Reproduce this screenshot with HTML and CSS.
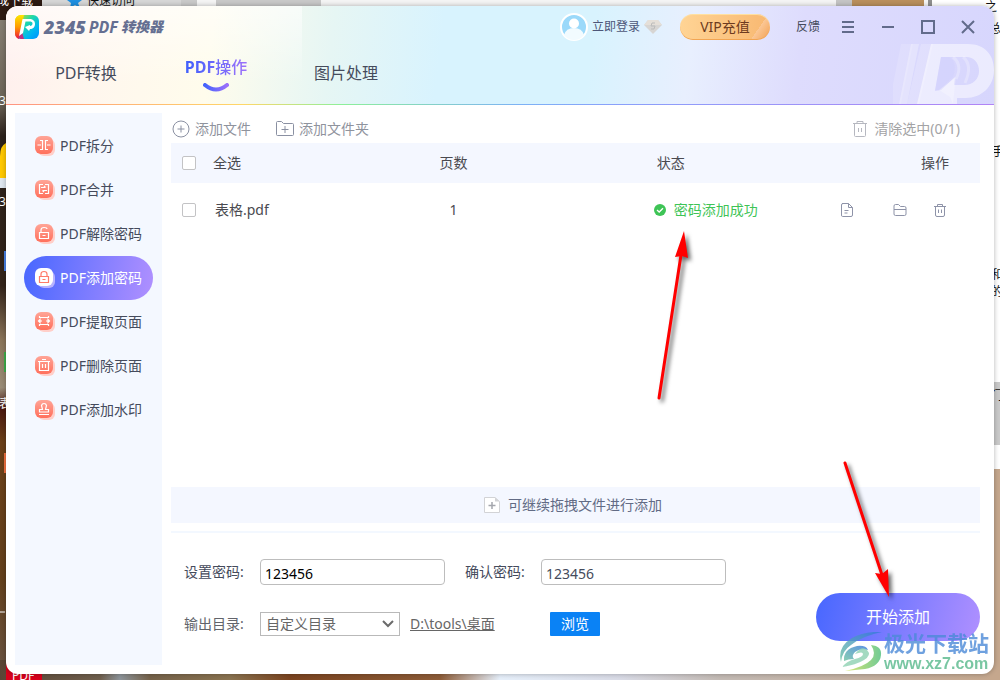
FILE: index.html
```html
<!DOCTYPE html>
<html lang="zh-CN">
<head>
<meta charset="utf-8">
<title>2345PDF转换器</title>
<link rel="stylesheet" href="styles.css">
</head>
<body>
<div class="desktop">
  <svg class="wallpaper" viewBox="0 0 1000 680" preserveAspectRatio="none" aria-hidden="true">
    <defs>
      <linearGradient id="wl" x1="0" y1="0" x2="0" y2="1">
        <stop offset="0" stop-color="#8b8378"/><stop offset=".15" stop-color="#6b6255"/><stop offset=".2" stop-color="#2c221b"/><stop offset=".42" stop-color="#33241a"/><stop offset=".5" stop-color="#8a7458"/><stop offset=".57" stop-color="#9a8c76"/><stop offset=".6" stop-color="#4a1810"/><stop offset=".65" stop-color="#6b4018"/><stop offset=".85" stop-color="#63401c"/><stop offset="1" stop-color="#6a5545"/>
      </linearGradient>
      <linearGradient id="wb">
        <stop offset="0" stop-color="#5a4535"/><stop offset=".1" stop-color="#6f5f4d"/><stop offset=".12" stop-color="#8d949a"/><stop offset=".15" stop-color="#75624a"/><stop offset=".23" stop-color="#8a7350"/><stop offset=".29" stop-color="#7b4420"/><stop offset=".44" stop-color="#8d5c38"/><stop offset=".5" stop-color="#e6effa"/><stop offset=".62" stop-color="#d9dbe6"/><stop offset=".72" stop-color="#c3bab4"/><stop offset="1" stop-color="#c5a78d"/>
      </linearGradient>
    </defs>
    <rect width="1000" height="680" fill="#f4f4f4"/>
    <rect width="20" height="680" fill="url(#wl)"/>
    <rect x="0" y="660" width="1000" height="20" fill="url(#wb)"/>
    <rect width="42" height="20" fill="#2d1a12"/>
    <rect x="42" width="139" height="20" fill="#d6d6d6"/>
    <rect x="181" width="16" height="20" fill="#c9c9c9"/>
    <rect x="216" width="105" height="20" fill="#c8c8c8"/>
    <rect x="836" width="16" height="20" fill="#c4c4c4"/>
    <rect x="852" width="72" height="20" fill="#b98f5c"/>
    <rect x="928" width="4" height="20" fill="#8f8f8f"/>
    <path d="M932 0h68v470h-10V10h-58z" fill="#fff"/>
    <path d="M990 382h10v63h-10z" fill="#c9c9c9"/>
    <path d="M990 469h10v211h-10z" fill="#c5a78d"/>
    <path d="M75 -6l2 5 5 1-4 3 2 5-5-3-5 3 1-5-4-3 5-1z" fill="#1e8fe0"/>
    <text class="bg-text" x="87" y="5">快速访问</text>
    <text class="bg-text bg-text-light" x="-3" y="5">成下载</text>
    <text class="bg-text" x="985" y="11">之</text>
    <text class="bg-text" x="989" y="33">总</text>
    <text class="bg-text" x="992" y="156">手</text>
    <text class="bg-text" x="991" y="279">和</text>
    <text class="bg-text" x="991" y="296">的</text>
    <text class="bg-text" x="991" y="400">门</text>
    <path d="M6 143q-6 3-6 13v22h6z" fill="#ffc800"/>
    <rect y="178" width="6" height="10" fill="#dfe7ef"/>
    <rect x="4" y="251" width="4" height="20" fill="#4a83e8"/>
    <rect x="4" y="352" width="4" height="20" fill="#3fae4a"/>
    <rect x="4" y="453" width="4" height="20" fill="#f27340"/>
    <text class="bg-text bg-text-light" x="-1" y="105">3</text>
    <text class="bg-text bg-text-light" x="-1" y="206">3</text>
    <text class="bg-text bg-text-light" x="-1" y="408">表</text>
    <path d="M0 612h5" stroke="#fff"/>
    <rect x="6" y="650" width="36" height="30" fill="#d9001b"/>
    <text class="bg-text bg-text-light" x="12" y="680">PDF</text>
  </svg>

  <main class="window">
    <header class="header">
      <svg class="header-mark" viewBox="0 0 101 60" aria-hidden="true">
        <path d="M8 0h12L8 60H-4z" fill="#fff" opacity=".14"/>
        <path d="M18 0h8L14 60H6z" fill="#fff" opacity=".28"/>
        <path d="M28 0h12L26 60H14z" fill="#fff" opacity=".2"/>
        <path d="M38 0h37c17 0 26 11 26 26 0 17-13 28-28 28H64v6H24zM48 13l-6 34 6-1 14-13-1 8h10c9 0 15-6 15-14s-5-14-13-14z" fill="#fff" fill-rule="evenodd" opacity=".5"/>
        <path d="M48 13h8q9 5 4 20L46 46h-4z" fill="#cfcdfb" opacity=".35"/>
        <path d="M60 13q10 8 3 22M70 13q10 8 2 26" fill="none" stroke="#fff" stroke-width="3" opacity=".25"/>
        <path d="M46 46l17-13-1 8-2 19-3-7z" fill="#fff" opacity=".25"/>
      </svg>
      <div class="titlebar">
        <svg class="logo" viewBox="0 0 24 24" aria-hidden="true">
          <defs>
            <linearGradient id="lg1" x1="0" y1="0" x2="1" y2="1"><stop offset="0" stop-color="#ffe000"/><stop offset=".4" stop-color="#20d8a8"/><stop offset=".7" stop-color="#00b8f0"/><stop offset="1" stop-color="#0090ff"/></linearGradient>
            <linearGradient id="lg2" x1="0" y1="0" x2="0" y2="1"><stop offset="0" stop-color="#ffe600"/><stop offset=".5" stop-color="#ff9a00"/><stop offset="1" stop-color="#f0103c"/></linearGradient>
          </defs>
          <rect width="24" height="24" rx="6" fill="url(#lg1)"/>
          <path d="M6 0h3L4 24a6 6 0 0 1-4-6V6a6 6 0 0 1 6-6z" fill="url(#lg2)"/>
          <path d="M3 23l4-6 2 7H6z" fill="#c03080"/>
          <path d="M8 18l-4 3L7.500 4H14c4 0 6 2 6 5s-2 5-5 5l-1 2-4-4 5-2v1c1.500 0 2.500-1 2.500-2.500S16.500 6.500 14 6.500h-3.500z" fill="#fff"/>
        </svg>
        <h1 class="brand"><span class="brand-num">2345</span><span class="brand-pdf">PDF</span><span class="brand-cn">转换器</span></h1>
        <button class="login" type="button">
          <svg class="avatar" viewBox="0 0 28 28" aria-hidden="true"><circle cx="14" cy="14" r="13" fill="#9bd9fa" stroke="#fff" stroke-width="2"/><circle cx="14" cy="10.500" r="5" fill="#fff"/><path d="M4 22q2-7 10-7t10 7q-4 5-10 5T4 22z" fill="#f2fbff"/></svg>
          <span>立即登录</span>
          <svg class="gem" viewBox="0 0 18 14" aria-hidden="true"><path d="M4 0h10l4 5-9 9-9-9z" fill="#d7d5d3"/><path d="M4 0h10l4 5H0z" fill="#e5dfd8"/><path d="M11 3H8L7 6h4l-1 3H7" fill="none" stroke="#bbb"/></svg>
        </button>
        <button class="vip" type="button">VIP充值</button>
        <a class="feedback" href="#">反馈</a>
        <div class="controls">
          <button type="button" aria-label="菜单"><svg viewBox="0 0 14 14"><path d="M1 2h12M1 7h12M1 12h12"/></svg></button>
          <button type="button" aria-label="最小化"><svg viewBox="0 0 14 14"><path d="M1 7h12"/></svg></button>
          <button type="button" aria-label="最大化"><svg viewBox="0 0 14 14"><path d="M1 1h12v12H1z"/></svg></button>
          <button type="button" aria-label="关闭"><svg viewBox="0 0 14 14"><path d="M1 1l12 12M13 1L1 13"/></svg></button>
        </div>
      </div>
      <nav class="tabs">
        <a class="tab" href="#">PDF转换</a>
        <a class="tab tab-active" href="#"><span class="tab-label"><b>PDF</b>操作</span>
          <svg class="smile" viewBox="0 0 26 9" aria-hidden="true"><defs><linearGradient id="sm"><stop offset="0" stop-color="#4563fc"/><stop offset="1" stop-color="#9a70fa"/></linearGradient></defs><path d="M2 2q11 9 22 0" fill="none" stroke="url(#sm)" stroke-width="4" stroke-linecap="round"/></svg>
        </a>
        <a class="tab" href="#">图片处理</a>
      </nav>
    </header>

    <div class="body">
      <svg class="defs" aria-hidden="true"><defs>
        <linearGradient id="coral" x1="0" y1="0" x2="0" y2="1"><stop offset="0" stop-color="#ffa597"/><stop offset="1" stop-color="#ff705c"/></linearGradient>
      </defs></svg>
      <nav class="sidebar">
        <a class="item" href="#"><svg class="tool" viewBox="0 0 20 20"><rect class="tool-shade" x="3" y="3" width="17" height="17" rx="6"/><rect class="tool-face" width="18" height="18" rx="6"/><path class="tool-line" d="M5 4.500h2.500v9H5M13 4.500h-2.500v9H13M2.500 9H6M12 9h3.500"/></svg>PDF拆分</a>
        <a class="item" href="#"><svg class="tool" viewBox="0 0 20 20"><rect class="tool-shade" x="3" y="3" width="17" height="17" rx="6"/><rect class="tool-face" width="18" height="18" rx="6"/><path class="tool-line" d="M8 4.500H4.500v9H8M10 4.500h3.500v9H10M6 7.500h4.500M9 6l1.500 1.500M12 10.500H7.500M9 12l-1.500-1.500"/></svg>PDF合并</a>
        <a class="item" href="#"><svg class="tool" viewBox="0 0 20 20"><rect class="tool-shade" x="3" y="3" width="17" height="17" rx="6"/><rect class="tool-face" width="18" height="18" rx="6"/><path class="tool-line" d="M4.500 8.500h9v6h-9zM6 8.500V6q0-2.500 3-2.500T12 5M7.500 11.500h3"/></svg>PDF解除密码</a>
        <a class="item item-active" href="#"><svg class="tool" viewBox="0 0 20 20"><rect class="tool-shade" x="3" y="3" width="17" height="17" rx="6"/><rect class="tool-face" width="18" height="18" rx="6"/><path class="tool-line" d="M4.500 8.500h9v6h-9zM6 8.500V6q0-2.500 3-2.500T12 6v2.500M7.500 11.500h3"/></svg>PDF添加密码</a>
        <a class="item" href="#"><svg class="tool" viewBox="0 0 20 20"><rect class="tool-shade" x="3" y="3" width="17" height="17" rx="6"/><rect class="tool-face" width="18" height="18" rx="6"/><path class="tool-line" d="M4.500 4v1.500h9V4M4.500 14v-1.500h9V14M3.500 9H7M14.500 9H11M5 7.500L3.500 9 5 10.500zM13 7.500L14.500 9 13 10.500z"/></svg>PDF提取页面</a>
        <a class="item" href="#"><svg class="tool" viewBox="0 0 20 20"><rect class="tool-shade" x="3" y="3" width="17" height="17" rx="6"/><rect class="tool-face" width="18" height="18" rx="6"/><path class="tool-line" d="M3 5.500h12M7 3.500h4M4.500 5.500v9h9v-9M7.500 8v4M10.500 8v4"/></svg>PDF删除页面</a>
        <a class="item" href="#"><svg class="tool" viewBox="0 0 20 20"><rect class="tool-shade" x="3" y="3" width="17" height="17" rx="6"/><rect class="tool-face" width="18" height="18" rx="6"/><path class="tool-line" d="M4 14.500h10M4.500 12V9.500h3L6.500 5.500Q7 3.500 9 3.500t2.500 2l-1 4h3V12z"/></svg>PDF添加水印</a>
      </nav>

      <section class="content">
        <div class="toolbar">
          <button class="tool-btn" type="button"><svg width="18" height="18" viewBox="0 0 18 18"><circle cx="9" cy="9" r="8"/><path d="M9 5.500v7M5.500 9h7"/></svg>添加文件</button>
          <button class="tool-btn" type="button"><svg width="18" height="18" viewBox="0 0 18 18"><path d="M.5 2.500q0-1 1-1h4l2 2h9q1 0 1 1v10q0 1-1 1h-15q-1 0-1-1zM9 6v7M5.500 9.500h7"/></svg>添加文件夹</button>
          <button class="tool-btn tool-clear" type="button"><svg width="16" height="18" viewBox="0 0 16 18"><path d="M1 3.500h14M5 3.500V1.500h6v2M2.500 3.500v12q0 1 1 1h9q1 0 1-1v-12M6.500 8v4M9.500 8v4"/></svg>清除选中(0/1)</button>
        </div>
        <table class="files">
          <colgroup><col class="c-check"><col class="c-name"><col class="c-pages"><col class="c-status"><col class="c-ops"></colgroup>
          <thead>
            <tr><th class="check"><input type="checkbox" id="all"></th><th><label for="all">全选</label></th><th>页数</th><th class="th-status">状态</th><th class="th-ops">操作</th></tr>
          </thead>
          <tbody>
            <tr><td class="check"><input type="checkbox" id="f1"></td><td class="name"><label for="f1">表格.pdf</label></td><td class="pages">1</td>
              <td><div class="status"><svg width="12" height="12" viewBox="0 0 12 12" aria-hidden="true"><circle cx="6" cy="6" r="6" fill="#3ec456"/><path d="M3 6l2.200 2L9 4.300" fill="none" stroke="#fff" stroke-width="1.300"/></svg>密码添加成功</div></td>
              <td><div class="ops">
                <button class="op-open" type="button" aria-label="打开文件"><svg viewBox="0 0 14 14"><path d="M2 .5h6.500l4 4V12q0 1.500-1.500 1.500H2.500Q1.500 13.500 1.500 12V2Q1.500.5 3 .5M8.500.5v4h4M4.500 7.500h4M4.500 10h3"/></svg></button>
                <button class="op-folder" type="button" aria-label="打开目录"><svg viewBox="0 0 14 14"><path d="M1 3q0-1.500 1.500-1.500h3l2 2h4Q13 3.500 13 5v6q0 1.500-1.500 1.500h-9Q1 12.500 1 11zM1 6.500h12"/></svg></button>
                <button type="button" aria-label="删除"><svg viewBox="0 0 14 14"><path d="M1 3.500h12M4.500 3.500v-2h5v2M2.500 3.500V12q0 1.500 1.500 1.500h6q1.500 0 1.500-1.500V3.500M5.500 6.500v3.500M8.500 6.500v3.500"/></svg></button>
              </div></td></tr>
          </tbody>
        </table>
        <div class="dropbar"><svg width="16" height="16" viewBox="0 0 16 16" aria-hidden="true"><path d="M.5.5H11l4.500 4v11H.5z" fill="#fff" stroke="#d2d3d6"/><path d="M11 .5v4h4.500z" fill="#d2d3d6"/><path d="M8 5v7M4.500 8.500h7" stroke="#a4a6ad" stroke-width="1.500"/></svg>可继续拖拽文件进行添加</div>
        <form class="options">
          <div class="fields">
            <div class="field-row">
              <label class="caption" for="pw1">设置密码:</label><input class="pw pw-main" id="pw1" type="text" value="123456">
              <label class="caption caption-next" for="pw2">确认密码:</label><input class="pw" id="pw2" type="text" value="123456">
            </div>
            <div class="field-row">
              <label class="caption caption-out" for="dir">输出目录:</label>
              <div class="select-wrap"><select id="dir"><option>自定义目录</option></select><svg class="chevron" viewBox="0 0 12 8" aria-hidden="true"><path d="M1 1l5 5 5-5" fill="none" stroke="#6b6b6b" stroke-width="2"/></svg></div>
              <a class="path" href="#">D:\tools\桌面</a>
              <button class="browse" type="button">浏览</button>
            </div>
          </div>
          <button class="start" type="button">开始添加</button>
        </form>
      </section>
    </div>
  </main>

  <svg class="arrows" viewBox="0 0 1000 680" aria-hidden="true">
    <g class="arrow"><path d="M659 398L681 255" stroke-width="3" stroke-linecap="round"/><path d="M684 231l4 27-6-2-7 1z"/></g>
    <g class="arrow"><path d="M845 463L882 575" stroke-width="3" stroke-linecap="round"/><path d="M889 597l-14-24 7 1 6-5z"/></g>
  </svg>

  <div class="stamp">
    <svg class="swirl" viewBox="0 0 42 40" aria-hidden="true">
      <defs><linearGradient id="sw1" x1="0" y1="1" x2="1" y2="0"><stop offset="0" stop-color="#6cc3a0"/><stop offset="1" stop-color="#3478dc"/></linearGradient><linearGradient id="sw2"><stop offset="0" stop-color="#d3e04e"/><stop offset="1" stop-color="#4fbf7c"/></linearGradient></defs>
      <path d="M42 0Q24-1 12 6-3 15 1 30q1-11 10-17Q22 4 42 0z" fill="url(#sw1)"/>
      <path d="M4 29q-1-12 13-15 9-1 11 4-8-2-13 2-4 4-1 7-6 0-10 2z" fill="url(#sw1)"/>
      <path d="M31 13q11 1 10 10-1 11-16 14l-20 2q19-4 26-11 6-6 0-15z" fill="url(#sw2)"/>
      <path d="M15 22q8-3 8 0t-8 5q-8 2-13 8 14-2 22-7t3-10-12 4z" fill="#79c9a5" opacity=".85"/>
    </svg>
    <div class="stamp-text"><span class="stamp-cn">极光下载站</span><span class="stamp-url">www.xz7.com</span></div>
  </div>
</div>
</body>
</html>
```
FILE: styles.css
```css
* { box-sizing: border-box; }
body {
  margin: 0;
  font: 14px/20px "Noto Sans", "Noto Sans CJK SC", sans-serif;
  color: #454b5c;
}
button, input, select { font: inherit; color: inherit; margin: 0; }
button { padding: 0; border: 0; background: none; }
a { color: inherit; text-decoration: none; }
svg { flex: none; }

.desktop { position: relative; display: flex; min-height: 100vh; padding: 6px; overflow: hidden; }
.wallpaper { position: absolute; inset: 0; width: 100%; height: 100%; }
.bg-text { font-size: 12px; fill: #111; }
.bg-text-light { fill: #fff; }

.window {
  position: relative; flex: 1; display: flex; flex-direction: column;
  background: #fff; border-radius: 12px; overflow: hidden;
  box-shadow: 0 0 5px rgba(0, 0, 0, .3);
}

/* Header */
.header {
  position: relative;
  border-bottom: 1px solid;
  border-image: linear-gradient(90deg, #ff9482, #ffd768 24%, #8df09a 34%, #7db2f5 52%, #8aa0fa 62%, #b184f5) 1;
  background:
    linear-gradient(180deg, rgba(255, 255, 255, .6), rgba(255, 255, 255, 0) 80%) left / 30% 100% no-repeat,
    linear-gradient(97deg, #ffefed, #fff6ee 8%, #fffcec 21%, #e6f6f4 33%, #d8f3fe 44%, #d8f3fe 59%, #e8effe 69%, #dedcfd 80%, #d7d6fd);
}
.header-mark { position: absolute; right: 0; bottom: 0; width: 101px; height: 60px; }
.titlebar { position: relative; display: flex; align-items: center; height: 42px; padding: 0 6px 0 9px; }
.logo { width: 24px; height: 24px; }
.brand {
  display: flex; align-items: center; gap: 3px; margin: 0 auto 0 5px;
  font-size: 16px; font-weight: 700; font-style: italic; color: #656f91;
}
.brand-num { font-size: 18px; font-weight: 900; }
.brand-cn { font-size: 14px; font-weight: 900; }
.login { display: flex; align-items: center; gap: 4px; margin-right: 18px; font-size: 12px; color: #4d5678; }
.avatar { width: 28px; height: 28px; }
.gem { width: 18px; height: 14px; }
.vip {
  width: 90px; height: 26px; border-radius: 13px; color: #6d3b20;
  background: linear-gradient(125deg, transparent 82%, #fbc795 82%, #f5ac66 94%), linear-gradient(90deg, #ffd495, #f8b871);
  box-shadow: inset 0 -1px #f2a552, inset 0 1px #ffe0a0;
}
.feedback { margin: 0 8px 0 26px; font-size: 12px; }
.controls { display: flex; }
.controls button { display: flex; justify-content: center; align-items: center; width: 40px; height: 30px; }
.controls svg { width: 14px; height: 14px; fill: none; stroke: #626b8b; stroke-width: 2; }
.tabs { position: relative; display: flex; height: 56px; padding-left: 15px; font-size: 16px; }
.tab { display: flex; flex-direction: column; align-items: center; width: 130px; padding-top: 15px; }
.tab-active { padding-top: 9px; }
.tab-label { font-weight: 500; color: transparent; background: linear-gradient(90deg, #4160fc, #9c72fa); background-clip: text; }
.smile { width: 26px; height: 9px; margin-top: 6px; }

/* Body */
.body { flex: 1; display: flex; gap: 9px; padding: 8px 14px 9px 9px; }
.defs { position: absolute; width: 0; height: 0; }
.sidebar { flex: none; width: 147px; padding: 11px 9px; background: #f4f8ff; }
.item { display: flex; align-items: center; gap: 5px; height: 44px; padding-left: 11px; border-radius: 22px; white-space: nowrap; }
.item-active { color: #fff; background: linear-gradient(100deg, #4767ff, #b090ff); }
.tool { width: 20px; height: 20px; }
.tool-shade { fill: #ffcfc9; }
.tool-face { fill: url(#coral); }
.tool-line { fill: none; stroke: #fff; stroke-width: 1.2; }
.item-active .tool-shade { fill: #b7b3ff; }
.item-active .tool-face { fill: #fff; }
.item-active .tool-line { stroke: #ff7b69; }

.content { flex: 1; display: flex; flex-direction: column; min-width: 0; }
.toolbar { display: flex; gap: 25px; height: 30px; padding: 1px 20px 0 1px; }
.tool-btn { display: flex; align-items: center; gap: 5px; color: #8f939d; }
.tool-btn svg { fill: none; stroke: #8a90a2; }
.tool-clear { gap: 6px; margin-left: auto; color: #a3a3a5; }
.tool-clear svg { stroke: #b6b8c0; }

.files { table-layout: fixed; width: 100%; border-collapse: collapse; color: #4a4a50; }
.c-check { width: 42px; }
.c-name { width: 28%; }
.c-pages { width: 26%; }
.c-status { width: 24%; }
.files th, .files td { padding: 0; text-align: left; font-weight: 400; }
.files th { height: 40px; background: #f4f7ff; }
.files td { height: 54px; }
.files .check { padding-left: 11px; }
.files .th-status { padding-left: 7px; }
.files .th-ops { padding-right: 31px; text-align: right; }
.files .name { padding-left: 2px; }
.files .pages { padding-left: 10px; }
.files input {
  display: block; appearance: none; width: 14px; height: 14px;
  border: 1px solid #c3c3c5; border-radius: 2px; background: #fff;
}
.status { display: flex; align-items: center; gap: 8px; padding-left: 4px; color: #3ec456; }
.ops { display: flex; justify-content: flex-end; padding-right: 33px; }
.ops button { display: flex; }
.ops svg { width: 14px; height: 14px; fill: none; stroke: #8e93a8; }
.ops .op-open { margin-right: 39px; }
.ops .op-folder { margin-right: 26px; }

.dropbar {
  display: flex; justify-content: center; align-items: center; gap: 8px;
  height: 36px; margin-top: auto; padding-right: 5px; background: #f4f7ff; color: #626b85;
}
.options {
  display: flex; justify-content: space-between; margin-top: 8px; padding-top: 26px;
  border-top: 2px solid #f3f8ff;
}
.fields { display: flex; flex-direction: column; gap: 27px; padding: 0 0 29px 13px; }
.field-row { display: flex; align-items: center; }
.caption { width: 76px; }
.caption-next { margin-left: 20px; }
.caption-out { color: #62646b; }
.pw { width: 185px; height: 26px; padding: 2px 4px 0; border: 1px solid #bdbdbd; border-radius: 4px; background: #fff; }
.pw-main { color: #000; }
.select-wrap { position: relative; width: 140px; }
.select-wrap select {
  display: block; appearance: none; width: 100%; height: 24px; padding: 0 5px;
  border: 1px solid #b9b9b9; border-radius: 0; background: #fff; color: #666;
}
.chevron { position: absolute; right: 6px; top: 8px; width: 12px; height: 8px; pointer-events: none; }
.path { width: 150px; padding-left: 10px; color: #666; text-decoration: underline; }
.browse { width: 50px; height: 24px; border-radius: 1px; background: #0a82f5; color: #fff; }
.start {
  width: 164px; height: 48px; margin-top: 34px; border-radius: 24px;
  font-size: 16px; color: #fff; background: linear-gradient(105deg, #4767ff, #b090ff);
}

/* Overlays */
.arrows { position: absolute; left: 0; top: 0; width: 1000px; height: 680px; pointer-events: none; }
.arrow { fill: #f00; filter: drop-shadow(3px 3px 2px rgba(0, 0, 0, .6)); }
.arrow path:first-child { stroke: #f00; }
.stamp { position: absolute; right: 11px; bottom: 7px; display: flex; gap: 2px; pointer-events: none; opacity: .8; }
.swirl { width: 42px; height: 40px; margin-top: 1px; }
.stamp-text { display: flex; flex-direction: column; white-space: nowrap; font-weight: 700; }
.stamp-cn { font-size: 21px; line-height: 24px; color: #4c8ad8; }
.stamp-url { font: 700 16px/18px "Liberation Sans", sans-serif; color: #58b98c; }
```
